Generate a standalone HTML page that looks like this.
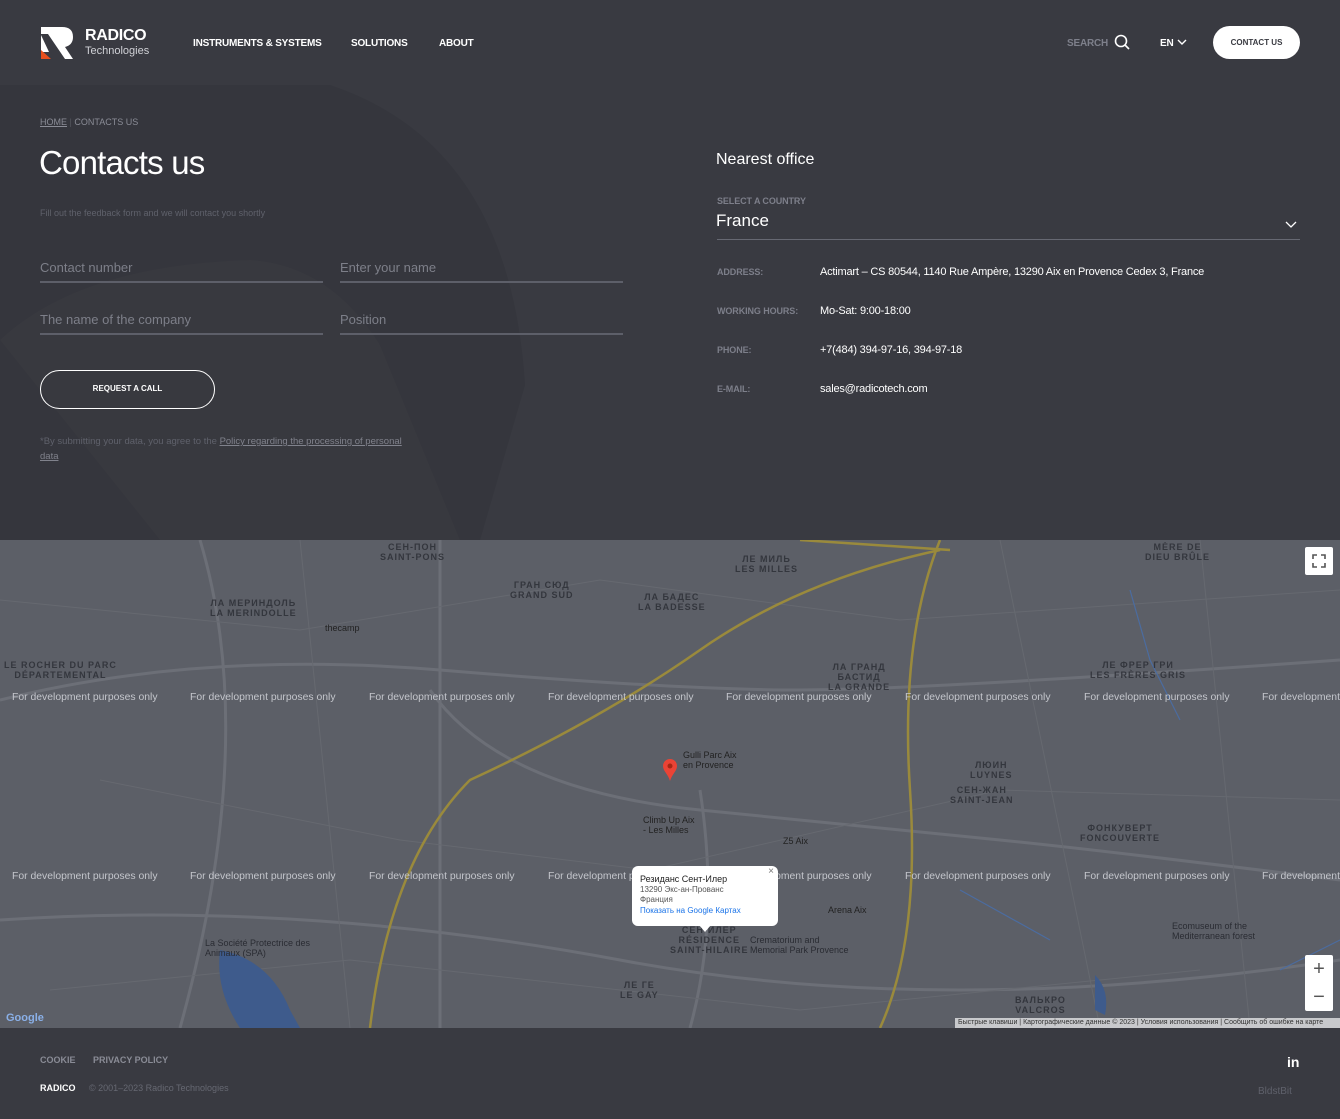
<!DOCTYPE html>
<html><head><meta charset="utf-8"><style>
*{margin:0;padding:0;box-sizing:border-box}
body{width:1340px;height:1119px;background:#393a41;font-family:"Liberation Sans",Arial,sans-serif;color:#fff;position:relative;overflow:hidden}
.a{position:absolute}
.nav{font-size:10px;font-weight:bold;letter-spacing:-.2px}
.lbl{font-size:9px;font-weight:bold;color:#7d7f8a;letter-spacing:-.1px}
.val{font-size:11px;color:#fff;letter-spacing:-.2px}
.inp{border-bottom:2px solid #5d5f69;font-size:13px;color:#7d7f89;padding-bottom:6px}
.wm{font-size:10.4px;color:#c4c6cc;white-space:nowrap}
.ml{font-size:9px;color:#2a2c33;letter-spacing:1px;text-align:center;line-height:10px;font-weight:bold;opacity:.8}
</style></head><body>
<div class="a" style="left:0;top:85px;width:1340px;height:455px;background:#393a41"></div>
<svg class="a" style="left:0;top:85px" width="700" height="455"><path d="M0 0 H330 Q510 60 525 300 L480 455 H0Z" fill="#35363d"/><path d="M0 255 Q80 180 250 175 Q330 180 380 260 L460 455 H160Z" fill="#38393f"/></svg>
<!-- logo -->
<svg class="a" style="left:40px;top:26px" width="34" height="34" viewBox="0 0 34 34"><path d="M1 1 H22 Q33 1 33 11 Q33 19 25 21 L33 33 H25 L8 8 H1Z M1 9 V26 L9 26Z" fill="#fff"/><path d="M1 24 L1 33 H11Z" fill="#e8501d"/></svg>
<div class="a" style="left:85px;top:27px;font-size:16px;font-weight:bold;letter-spacing:-.3px">RADICO</div>
<div class="a" style="left:85px;top:45px;font-size:11px;color:#d0d1d6">Technologies</div>
<div class="a nav" style="left:193px;top:38px">INSTRUMENTS &amp; SYSTEMS</div>
<div class="a nav" style="left:351px;top:38px">SOLUTIONS</div>
<div class="a nav" style="left:439px;top:38px">ABOUT</div>
<div class="a nav" style="left:1067px;top:38px;color:#7e808b;font-weight:bold">SEARCH</div>
<svg class="a" style="left:1114px;top:34px" width="16" height="16"><circle cx="7" cy="7" r="5.5" stroke="#fff" stroke-width="1.6" fill="none"/><path d="M11 11 L15 15" stroke="#fff" stroke-width="1.6"/></svg>
<div class="a nav" style="left:1160px;top:38px">EN</div>
<svg class="a" style="left:1177px;top:38px" width="10" height="8"><path d="M1 2 L5 6 L9 2" stroke="#fff" stroke-width="1.4" fill="none"/></svg>
<div class="a" style="left:1213px;top:26px;width:87px;height:33px;background:#fff;border-radius:17px;color:#3a3b42;font-size:8px;font-weight:bold;text-align:center;line-height:33px">CONTACT US</div>
<!-- left -->
<div class="a" style="left:40px;top:117px;font-size:9px;color:#8a8c96"><u>HOME</u> <span style="color:#55575f">|</span> CONTACTS US</div>
<div class="a" style="left:39px;top:144px;font-size:33px;font-weight:300;letter-spacing:-.8px">Contacts us</div>
<div class="a" style="left:40px;top:208px;font-size:9px;color:#5f616b">Fill out the feedback form and we will contact you shortly</div>
<div class="a inp" style="left:40px;top:260px;width:283px">Contact number</div>
<div class="a inp" style="left:340px;top:260px;width:283px">Enter your name</div>
<div class="a inp" style="left:40px;top:312px;width:283px">The name of the company</div>
<div class="a inp" style="left:340px;top:312px;width:283px">Position</div>
<div class="a" style="left:40px;top:370px;width:175px;height:39px;border:1.5px solid #fff;border-radius:20px;font-size:8px;font-weight:bold;text-align:center;line-height:36px">REQUEST A CALL</div>
<div class="a" style="left:40px;top:434px;width:380px;font-size:9.5px;color:#5f616b;line-height:15px">*By submitting your data, you agree to the <u style="color:#80828c">Policy regarding the processing of personal data</u></div>
<!-- right -->
<div class="a" style="left:716px;top:151px;font-size:16px">Nearest office</div>
<div class="a lbl" style="left:717px;top:196px">SELECT A COUNTRY</div>
<div class="a" style="left:716px;top:211px;font-size:17px">France</div>
<svg class="a" style="left:1285px;top:220px" width="12" height="8"><path d="M1 2 L6 7 L11 2" stroke="#fff" stroke-width="1.3" fill="none"/></svg>
<div class="a" style="left:717px;top:239px;width:583px;height:1px;background:#666872"></div>
<div class="a lbl" style="left:717px;top:267px">ADDRESS:</div><div class="a val" style="left:820px;top:266px">Actimart – CS 80544, 1140 Rue Ampère, 13290 Aix en Provence Cedex 3, France</div>
<div class="a lbl" style="left:717px;top:306px">WORKING HOURS:</div><div class="a val" style="left:820px;top:305px">Mo-Sat: 9:00-18:00</div>
<div class="a lbl" style="left:717px;top:345px">PHONE:</div><div class="a val" style="left:820px;top:344px">+7(484) 394-97-16, 394-97-18</div>
<div class="a lbl" style="left:717px;top:384px">E-MAIL:</div><div class="a val" style="left:820px;top:383px">sales@radicotech.com</div>
<!-- map -->
<div class="a" style="left:0;top:540px;width:1340px;height:488px;background:#5c5f67;overflow:hidden">
<svg class="a" style="left:0;top:0" width="1340" height="488" fill="none">
<g stroke="#6c6f77" stroke-width="3"><path d="M0 160 Q200 110 440 130 T800 150 T1340 120"/><path d="M440 0 V488"/><path d="M430 150 Q500 250 700 270 T1000 300 T1340 340"/><path d="M0 380 Q300 360 620 420 T1340 420"/><path d="M200 0 Q260 200 180 488"/><path d="M700 250 Q720 380 690 488"/></g>
<g stroke="#666970" stroke-width="1"><path d="M0 60 L300 90 L600 40 L900 80 L1340 50"/><path d="M100 240 L400 300 L650 330 L1000 250 L1340 260"/><path d="M50 450 L350 420 L800 470 L1200 430"/><path d="M1000 0 L1100 488"/><path d="M1200 0 L1250 488"/><path d="M300 0 L350 488"/></g>
<g stroke="#9a8a3c" stroke-width="2.5"><path d="M940 0 Q900 100 910 250 T880 488"/><path d="M940 10 Q800 40 700 110 T470 240 Q390 320 370 488"/><path d="M800 0 L950 10"/></g>
<g stroke="#4b6ca0" stroke-width="1.2"><path d="M1130 50 L1150 120 L1180 180"/><path d="M960 350 L1050 400"/><path d="M1280 430 L1340 400"/></g>
<path d="M220 410 Q270 420 290 470 L300 488 H240 Q215 450 220 410Z" fill="#3e5b8c"/>
<path d="M1095 435 Q1110 450 1105 475 L1095 470Z" fill="#3e5b8c"/>
</svg>
<div class="a wm" style="left:12px;top:152px">For development purposes only</div>
<div class="a wm" style="left:190px;top:152px">For development purposes only</div>
<div class="a wm" style="left:369px;top:152px">For development purposes only</div>
<div class="a wm" style="left:548px;top:152px">For development purposes only</div>
<div class="a wm" style="left:726px;top:152px">For development purposes only</div>
<div class="a wm" style="left:905px;top:152px">For development purposes only</div>
<div class="a wm" style="left:1084px;top:152px">For development purposes only</div>
<div class="a wm" style="left:1262px;top:152px">For development purposes only</div>
<div class="a wm" style="left:12px;top:331px">For development purposes only</div>
<div class="a wm" style="left:190px;top:331px">For development purposes only</div>
<div class="a wm" style="left:369px;top:331px">For development purposes only</div>
<div class="a wm" style="left:548px;top:331px">For development purposes only</div>
<div class="a wm" style="left:726px;top:331px">For development purposes only</div>
<div class="a wm" style="left:905px;top:331px">For development purposes only</div>
<div class="a wm" style="left:1084px;top:331px">For development purposes only</div>
<div class="a wm" style="left:1262px;top:331px">For development purposes only</div>
<div class="a ml" style="left:380px;top:2px">СЕН-ПОН<br>SAINT-PONS</div>
<div class="a ml" style="left:210px;top:58px">ЛА МЕРИНДОЛЬ<br>LA MERINDOLLE</div>
<div class="a ml" style="left:510px;top:40px">ГРАН СЮД<br>GRAND SUD</div>
<div class="a ml" style="left:638px;top:52px">ЛА БАДЕС<br>LA BADESSE</div>
<div class="a ml" style="left:735px;top:14px">ЛЕ МИЛЬ<br>LES MILLES</div>
<div class="a ml" style="left:4px;top:120px">LE ROCHER DU PARC<br>DÉPARTEMENTAL</div>
<div class="a ml" style="left:828px;top:122px">ЛА ГРАНД<br>БАСТИД<br>LA GRANDE</div>
<div class="a ml" style="left:1090px;top:120px">ЛЕ ФРЕР ГРИ<br>LES FRÈRES GRIS</div>
<div class="a ml" style="left:1145px;top:2px">MÈRE DE<br>DIEU BRÛLE</div>
<div class="a ml" style="left:970px;top:220px">ЛЮИН<br>LUYNES</div>
<div class="a ml" style="left:950px;top:245px">СЕН-ЖАН<br>SAINT-JEAN</div>
<div class="a ml" style="left:1080px;top:283px">ФОНКУВЕРТ<br>FONCOUVERTE</div>
<div class="a ml" style="left:670px;top:385px">СЕН-ИЛЕР<br>RÉSIDENCE<br>SAINT-HILAIRE</div>
<div class="a ml" style="left:620px;top:440px">ЛЕ ГЕ<br>LE GAY</div>
<div class="a ml" style="left:1015px;top:455px">ВАЛЬКРО<br>VALCROS</div>
<div class="a" style="left:683px;top:210px;font-size:9px;color:#222;line-height:10px">Gulli Parc Aix<br>en Provence</div>
<div class="a" style="left:643px;top:275px;font-size:9px;color:#222;line-height:10px">Climb Up Aix<br>- Les Milles</div>
<div class="a" style="left:783px;top:296px;font-size:9px;color:#222">Z5 Aix</div>
<div class="a" style="left:828px;top:365px;font-size:9px;color:#222">Arena Aix</div>
<div class="a" style="left:1172px;top:381px;font-size:9px;color:#2a2c33;line-height:10px">Ecomuseum of the<br>Mediterranean forest</div>
<div class="a" style="left:750px;top:395px;font-size:9px;color:#2a2c33;line-height:10px">Crematorium and<br>Memorial Park Provence</div>
<div class="a" style="left:325px;top:83px;font-size:9px;color:#222">thecamp</div>
<div class="a" style="left:205px;top:398px;font-size:9px;color:#2a2c33;line-height:10px">La Société Protectrice des<br>Animaux (SPA)</div>
<svg class="a" style="left:662px;top:218px" width="16" height="24"><path d="M8 23 C6 16 1 13 1 8 A7 7 0 0 1 15 8 C15 13 10 16 8 23Z" fill="#ea4335"/><circle cx="8" cy="8" r="2.5" fill="#a52714"/></svg>
<div class="a" style="left:632px;top:326px;width:146px;height:60px;background:#fff;border-radius:6px;padding:8px 8px;font-size:8px;color:#555;line-height:10.5px">
<div style="font-size:9px;color:#222;font-weight:500">Резиданс Сент-Илер</div>13290 Экс-ан-Прованс<br>Франция<br><span style="color:#1a73e8">Показать на Google Картах</span>
<div class="a" style="right:4px;top:1px;color:#777;font-size:10px">×</div></div>
<div class="a" style="left:699px;top:385px;width:0;height:0;border-left:6px solid transparent;border-right:6px solid transparent;border-top:7px solid #fff"></div>
<div class="a" style="left:1305px;top:7px;width:28px;height:28px;background:#fff;border-radius:2px"></div>
<svg class="a" style="left:1312px;top:14px" width="14" height="14" stroke="#555" stroke-width="1.6" fill="none"><path d="M1 5V1H5M9 1H13V5M13 9V13H9M5 13H1V9"/></svg>
<div class="a" style="left:1305px;top:415px;width:28px;height:56px;background:#fff;border-radius:2px;color:#555;font-size:20px;text-align:center;line-height:28px">+<br>−</div>
<div class="a" style="left:6px;top:472px;font-size:11px;font-weight:bold;color:#8ab0e8">Google</div>
<div class="a" style="left:955px;top:478px;width:385px;height:10px;background:#c8c9cc;font-size:7px;color:#333;line-height:10px;white-space:nowrap;padding-left:3px">Быстрые клавиши | Картографические данные © 2023 | Условия использования | Сообщить об ошибке на карте</div>
</div>
<!-- footer -->
<div class="a" style="left:40px;top:1055px;font-size:9px;font-weight:bold;color:#8a8c96">COOKIE</div>
<div class="a" style="left:93px;top:1055px;font-size:9px;font-weight:bold;color:#8a8c96">PRIVACY POLICY</div>
<div class="a" style="left:40px;top:1083px;font-size:9px;font-weight:bold">RADICO</div>
<div class="a" style="left:89px;top:1083px;font-size:9px;color:#666872">© 2001–2023 Radico Technologies</div>
<div class="a" style="left:1287px;top:1054px;font-size:14px;font-weight:bold">in</div>
<div class="a" style="left:1258px;top:1086px;font-size:10px;color:#5f616b">BldstBit</div>
</body></html>
